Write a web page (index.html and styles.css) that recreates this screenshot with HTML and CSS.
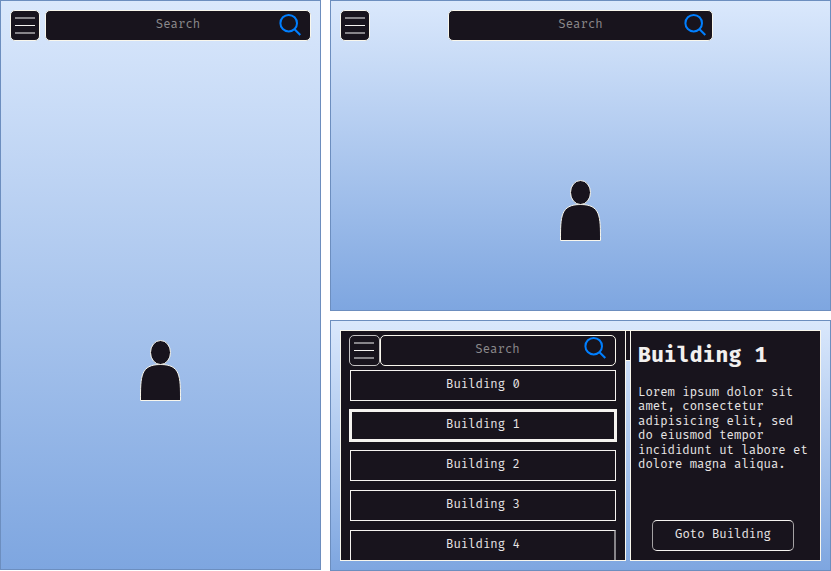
FILE: index.html
```html
<!DOCTYPE html>
<html lang="en">
<head>
<meta charset="utf-8">
<title>Campus map</title>
<link rel="stylesheet" href="styles.css">
</head>
<body>
<svg class="defs" width="0" height="0">
  <symbol id="menu" viewBox="0 0 30 31"><path d="M5 8H25M5 23H25" stroke="#87858a" stroke-width="2"/><path d="M5 15.5H25" stroke="#f5f3f0"/></symbol>
  <symbol id="lens" viewBox="0 0 24 24"><g fill="none" stroke="#007fff" stroke-width="2"><circle cx="9.7" cy="10.2" r="8.3"/><path d="M15.5 16.2L21.3 22"/></g></symbol>
  <symbol id="person" viewBox="0 0 42 62"><g fill="#18141d" stroke="#f9f7ed"><path d="M.5 60.5C.5 36.5 .5 24.5 20.5 24.5S40.5 36.5 40.5 60.5Z"/><ellipse cx="20.5" cy="12.5" rx="10" ry="12"/></g></symbol>
</svg>
<main class="screens">
  <section class="screen portrait">
    <header class="bar">
      <button class="menu"><svg><use href="#menu"/></svg></button>
      <div class="search"><span>Search</span><svg class="lens"><use href="#lens"/></svg></div>
    </header>
    <svg class="person"><use href="#person"/></svg>
  </section>
  <div class="column">
    <section class="screen landscape">
      <header class="bar">
        <button class="menu"><svg><use href="#menu"/></svg></button>
        <div class="search"><span>Search</span><svg class="lens"><use href="#lens"/></svg></div>
      </header>
      <svg class="person"><use href="#person"/></svg>
    </section>
    <section class="screen results">
      <div class="list">
        <header class="bar">
          <button class="menu"><svg><use href="#menu"/></svg></button>
          <div class="search"><span>Search</span><svg class="lens"><use href="#lens"/></svg></div>
        </header>
        <div class="items">
          <div class="item">Building 0</div>
          <div class="item selected">Building 1</div>
          <div class="item">Building 2</div>
          <div class="item">Building 3</div>
          <div class="item last">Building 4</div>
        </div>
      </div>
      <div class="sliver"></div>
      <article class="detail">
        <h1>Building 1</h1>
        <p>Lorem ipsum dolor sit amet, consectetur adipisicing elit, sed do eiusmod tempor incididunt ut labore et dolore magna aliqua.</p>
        <button class="goto">Goto Building</button>
      </article>
    </section>
  </div>
</main>
</body>
</html>
```
FILE: styles.css
```css
* { box-sizing: border-box; }
body { margin: 0; background: #fff; color: #e8e6e6; font: 12px/14.4px "Fira Code", "DejaVu Sans Mono", monospace; }
svg { display: block; }
.defs { position: absolute; }
button { font: inherit; color: inherit; padding: 0; }
.screens { display: grid; grid-template-columns: 321px 501px; gap: 9px; height: 571px; }
.column { display: grid; grid-template-rows: 311px 251px; gap: 9px; }
.screen { display: flex; flex-direction: column; align-items: center; border: 1px solid #6c8ebf; background: linear-gradient(#dae8fc, #7ea6e0); }
.portrait { height: 570px; padding: 9px; }
.landscape { padding: 9px; }
.bar { display: flex; align-self: stretch; height: 31px; }
.menu, .search, .goto { flex: none; border: 1px solid #f9f7ed; border-radius: 5px; background: #18141d; }
.menu { width: 30px; height: 31px; }
.menu svg { width: 30px; height: 31px; margin: -1px; }
.search { display: flex; align-items: center; justify-content: center; position: relative; width: 266px; height: 31px; color: #8c8a8c; padding-bottom: 1px; }
.lens { position: absolute; width: 24px; height: 24px; right: 7px; top: 2px; }
.portrait .bar { gap: 5px; }
.landscape .bar { gap: 78px; }
.landscape .search { width: 265px; }
.landscape .lens { right: 4px; }
.person { width: 42px; height: 62px; flex: none; }
.portrait .person { margin: 299px 0 0 1px; }
.landscape .person { margin: 139px 0 0 1px; }
.results { flex-direction: row; align-items: stretch; padding: 9px; }
.list { width: 286px; height: 231px; border: 1px solid #f9f7ed; background: #18141d; padding: 4px 9px 0 8px; overflow: hidden; }
.list .menu { width: 31px; border-color: #c4c2c2; }
.list .search { width: 236px; padding-right: 1px; }
.list .lens { right: 7px; top: 0; }
.items { display: grid; grid-auto-rows: 31px; gap: 9px; margin: 4px 0 0 1px; }
.item { display: flex; align-items: center; justify-content: center; width: 266px; border: 1px solid #f5f3f0; padding-bottom: 1px; }
.selected { width: 268px; height: 33px; margin: -1px; border-width: 3px; }
.last { border-right: 2px solid #87858a; padding-left: 1px; }
.sliver { width: 4px; height: 31px; border: solid #f9f7ed; border-width: 1px 0; background: #18141d; }
.detail { display: flex; flex-direction: column; width: 191px; height: 231px; border: 1px solid #f9f7ed; background: #18141d; padding: 11px 7px 9px; }
h1 { margin: 0 0 17px; font-size: 21px; line-height: 27px; color: #f2f0ee; }
p { margin: 0; width: 174px; }
.goto { width: 142px; height: 31px; margin: auto 0 0 14px; padding-bottom: 1px; border-color: #f5f3f0 #a4a2a4; }
```
